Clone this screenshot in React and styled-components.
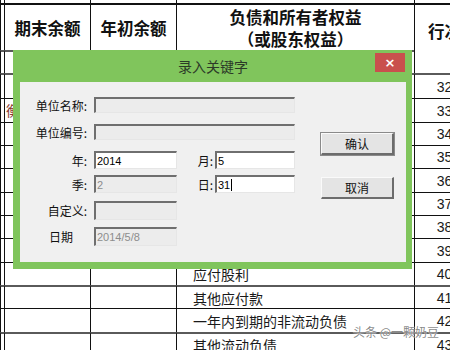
import React from 'react';
import styled, { createGlobalStyle } from 'styled-components';

const GlobalStyle = createGlobalStyle`
    html, body {
        margin: 0;
        padding: 0;
        background: #fff;
        overflow: hidden;
    }
    body {
        font-family: "Noto Sans CJK SC", "Liberation Sans", sans-serif;
    }
`;

const Screen = styled.div`
    position: relative;
    width: 450px;
    height: 350px;
    overflow: hidden;
    background: #fff;
`;

const rows = [
    { no: 32, h: 25, line: 'gray', name: '短期借款' },
    { no: 33, h: 24, line: 'thin', name: '交易性金融负债', side: '衡' },
    { no: 34, h: 23, line: 'thin', name: '应付票据' },
    { no: 35, h: 23, line: 'thin', name: '应付账款' },
    { no: 36, h: 24, line: 'thin', name: '预收款项' },
    { no: 37, h: 23, line: 'thin', name: '应付职工薪酬' },
    { no: 38, h: 23, line: 'thin', name: '应交税费' },
    { no: 39, h: 24, line: 'thin', name: '应付利息' },
    { no: 40, h: 23, line: 'thin', name: '应付股利' },
    { no: 41, h: 23, line: 'gray', name: '其他应付款' },
    { no: 42, h: 24, line: 'thin', name: '一年内到期的非流动负债' },
    { no: 43, h: 23, line: 'gray', name: '其他流动负债' },
];

const Sheet = styled.div`
    display: grid;
    grid-template-columns: 4px 86px 86px 238px 60px 80px;
    grid-template-rows: 3px 47px 23px ${rows.map(r => `${r.h}px`).join(' ')};
`;

const lineStyles = {
    none: 'border-top: none;',
    thin: 'border-top: 1px solid #111;',
    head: 'border-top: 2px solid #111;',
    gray: 'border-top: 2px solid #5a5a5a;',
};

const Cell = styled.div`
    box-sizing: border-box;
    min-width: 0;
    overflow: hidden;
    white-space: nowrap;
    border-left: 1px solid #111;
    ${p => lineStyles[p.$line || 'thin']}
    display: flex;
    align-items: center;
    color: #1a1a1a;
`;

const HeadCell = styled(Cell)`
    justify-content: center;
    text-align: center;
    font-size: 16.5px;
    font-weight: 700;
    line-height: 22px;
    color: #111;
`;

const RowNoHead = styled(HeadCell)`
    grid-row: span 2;
    align-items: flex-start;
    padding-top: 15px;
`;

const ItemCell = styled(Cell)`
    padding-left: 16px;
    font-size: 14px;
`;

const NumCell = styled(Cell)`
    justify-content: center;
    font-family: "Liberation Sans", sans-serif;
    font-size: 14px;
`;

const SideCell = styled(Cell)`
    align-items: flex-start;
    padding-top: 1px;
    padding-left: 1px;
    font-size: 14px;
    color: #8a3b32;
`;

const Dialog = styled.div`
    position: absolute;
    left: 13px;
    top: 50px;
    width: 399px;
    height: 219px;
    box-sizing: border-box;
    padding: 0 6px 7px 7px;
    background: #80c55c;
    display: flex;
    flex-direction: column;
`;

const TitleBar = styled.div`
    height: 32px;
    display: grid;
    grid-template-columns: 31px 1fr 31px;
    align-items: center;
`;

const Title = styled.div`
    grid-column: 2;
    text-align: center;
    font-size: 14px;
    color: #2c3a28;
`;

const CloseButton = styled.div`
    grid-column: 3;
    align-self: start;
    justify-self: end;
    margin-top: 3px;
    margin-right: 1px;
    width: 30px;
    height: 19px;
    background: #c9504d;
    color: #fff;
    display: flex;
    align-items: center;
    justify-content: center;
    font-family: "DejaVu Sans", sans-serif;
    font-size: 13px;
    font-weight: 700;
`;

const Client = styled.div`
    flex: 1;
    background: #f0f0f0;
    display: flex;
    align-items: flex-start;
`;

const Form = styled.div`
    display: grid;
    grid-template-columns: 59px 83px 38px 80px;
    grid-template-rows: 27px 27px 24px 26px 26px 19px;
    align-items: start;
    padding: 15px 0 0 15px;
`;

const Label = styled.div`
    grid-column: ${p => p.$col || 1};
    height: ${p => p.$h}px;
    display: flex;
    align-items: center;
    justify-content: ${p => (p.$start ? 'flex-start' : 'flex-end')};
    padding-left: ${p => (p.$start ? 14 : 0)}px;
    padding-right: ${p => p.$pr ?? 7}px;
    font-size: 12px;
    color: #111;
    white-space: nowrap;
`;

const Field = styled.div`
    grid-column: ${p => p.$span || 'auto'};
    box-sizing: border-box;
    height: ${p => p.$h}px;
    border-style: solid;
    border-width: 2px 1px 1px 2px;
    border-color: #6f6f6f #e6e6e6 #e6e6e6 #6f6f6f;
    background: ${p => (p.$disabled ? '#ececec' : '#fff')};
    color: ${p => (p.$disabled ? '#8c8c8c' : '#000')};
    font-family: "Liberation Sans", sans-serif;
    font-size: 11px;
    padding-left: 1px;
    display: flex;
    align-items: center;
`;

const Caret = styled.span`
    display: inline-block;
    width: 1px;
    height: 12px;
    margin-left: 1px;
    background: #000;
`;

const ButtonColumn = styled.div`
    display: flex;
    flex-direction: column;
    gap: 22px;
    margin-left: 26px;
    padding-top: 51px;
`;

const Button = styled.div`
    box-sizing: border-box;
    width: 73px;
    height: 22px;
    background: #e4e4e4;
    border-style: solid;
    border-width: 1px 2px 2px 1px;
    border-color: #fafafa #6c6c6c #6c6c6c #fafafa;
    outline: ${p => (p.$default ? '1px solid #8a8a8a' : 'none')};
    display: flex;
    align-items: center;
    justify-content: center;
    font-size: 12px;
    color: #111;
`;

const Watermark = styled.div`
    position: absolute;
    right: 11px;
    bottom: 12px;
    font-size: 12px;
    line-height: 12px;
    color: rgba(70, 70, 70, 0.65);
    text-shadow: 0 0 2px #fff, 0 0 1px #fff;
    white-space: nowrap;
`;

export default function App() {
    return (
        <Screen>
            <GlobalStyle />
            <Sheet>
                {[0, 1, 2, 3, 4, 5].map(i => <Cell key={`t${i}`} $line="none" />)}

                <Cell $line="head" />
                <HeadCell $line="head">期末余额</HeadCell>
                <HeadCell $line="head">年初余额</HeadCell>
                <HeadCell $line="head">负债和所有者权益<br />（或股东权益）</HeadCell>
                <RowNoHead $line="head">行次</RowNoHead>
                <HeadCell $line="head" />

                <Cell $line="gray" />
                <Cell $line="gray" />
                <Cell $line="gray" />
                <ItemCell $line="gray">流动负债：</ItemCell>
                <Cell $line="gray" />

                {rows.map(r => (
                    <React.Fragment key={r.no}>
                        <Cell $line={r.line} />
                        <SideCell $line={r.line}>{r.side}</SideCell>
                        <Cell $line={r.line} />
                        <ItemCell $line={r.line}>{r.name}</ItemCell>
                        <NumCell $line={r.line}>{r.no}</NumCell>
                        <Cell $line={r.line} />
                    </React.Fragment>
                ))}
            </Sheet>

            <Dialog>
                <TitleBar>
                    <Title>录入关键字</Title>
                    <CloseButton>×</CloseButton>
                </TitleBar>
                <Client>
                    <Form>
                        <Label $h={16}>单位名称:</Label>
                        <Field $h={16} $span="2 / 5" $disabled />

                        <Label $h={16}>单位编号:</Label>
                        <Field $h={16} $span="2 / 5" $disabled />

                        <Label $h={18}>年:</Label>
                        <Field $h={18} $span="2">2014</Field>
                        <Label $h={18} $col={3} $pr={2}>月:</Label>
                        <Field $h={18} $span="4">5</Field>

                        <Label $h={18}>季:</Label>
                        <Field $h={18} $span="2" $disabled>2</Field>
                        <Label $h={18} $col={3} $pr={2}>日:</Label>
                        <Field $h={18} $span="4">31<Caret /></Field>

                        <Label $h={19}>自定义:</Label>
                        <Field $h={19} $span="2" $disabled />

                        <Label $h={19} $start>日期</Label>
                        <Field $h={19} $span="2" $disabled>2014/5/8</Field>
                    </Form>
                    <ButtonColumn>
                        <Button $default>确认</Button>
                        <Button>取消</Button>
                    </ButtonColumn>
                </Client>
            </Dialog>

            <Watermark>头条 @一颗奶豆</Watermark>
        </Screen>
    );
}
